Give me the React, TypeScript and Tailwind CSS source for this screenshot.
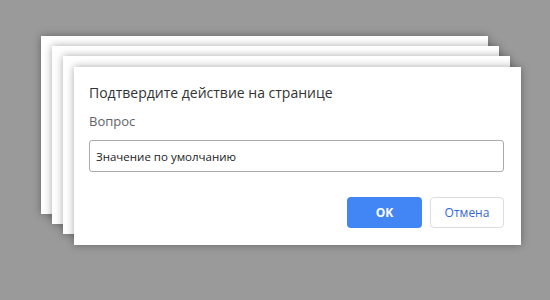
const font = { fontFamily: '"Open Sans", "Noto Sans", sans-serif' };

function Dialog(props: { children?: React.ReactNode; className: string }) {
  return (
    <div
      className={`absolute h-[178px] w-[447px] bg-white shadow-[0_0_8px_rgba(0,0,0,0.35)] ${props.className}`}
    >
      {props.children}
    </div>
  );
}

export default function App() {
  return (
    <div className="h-[300px] w-[550px] bg-[#9a9a9a] relative overflow-hidden" style={font}>
      <Dialog className="left-[41px] top-[36px]" />
      <Dialog className="left-[52px] top-[46px]" />
      <Dialog className="left-[63px] top-[56px]" />
      <Dialog className="left-[74px] top-[67px]">
        <div className="flex h-full flex-col px-[15px] pt-[15px]">
          <div className="text-[14px] leading-[22px] text-[#333]">Подтвердите действие на странице</div>
          <div className="mt-[8px] text-[13px] leading-[18px] text-[#5f6368]">Вопрос</div>
          <input
            readOnly
            value="Значение по умолчанию"
            className="mt-[10px] h-[32px] w-[415px] rounded-[3px] border border-[#aaa] px-[6px] text-[11.5px] text-[#222] outline-none"
            style={font}
          />
          <div className="mt-[25px] flex justify-end gap-[8px] pr-[2px]">
            <button className="h-[31px] w-[75px] rounded-[4px] bg-[#4285f4] text-[12px] font-bold text-white">
              OK
            </button>
            <button className="h-[31px] w-[74px] rounded-[4px] border border-[#dadce0] bg-white text-[12px] text-[#3367d6]">
              Отмена
            </button>
          </div>
        </div>
      </Dialog>
    </div>
  );
}
